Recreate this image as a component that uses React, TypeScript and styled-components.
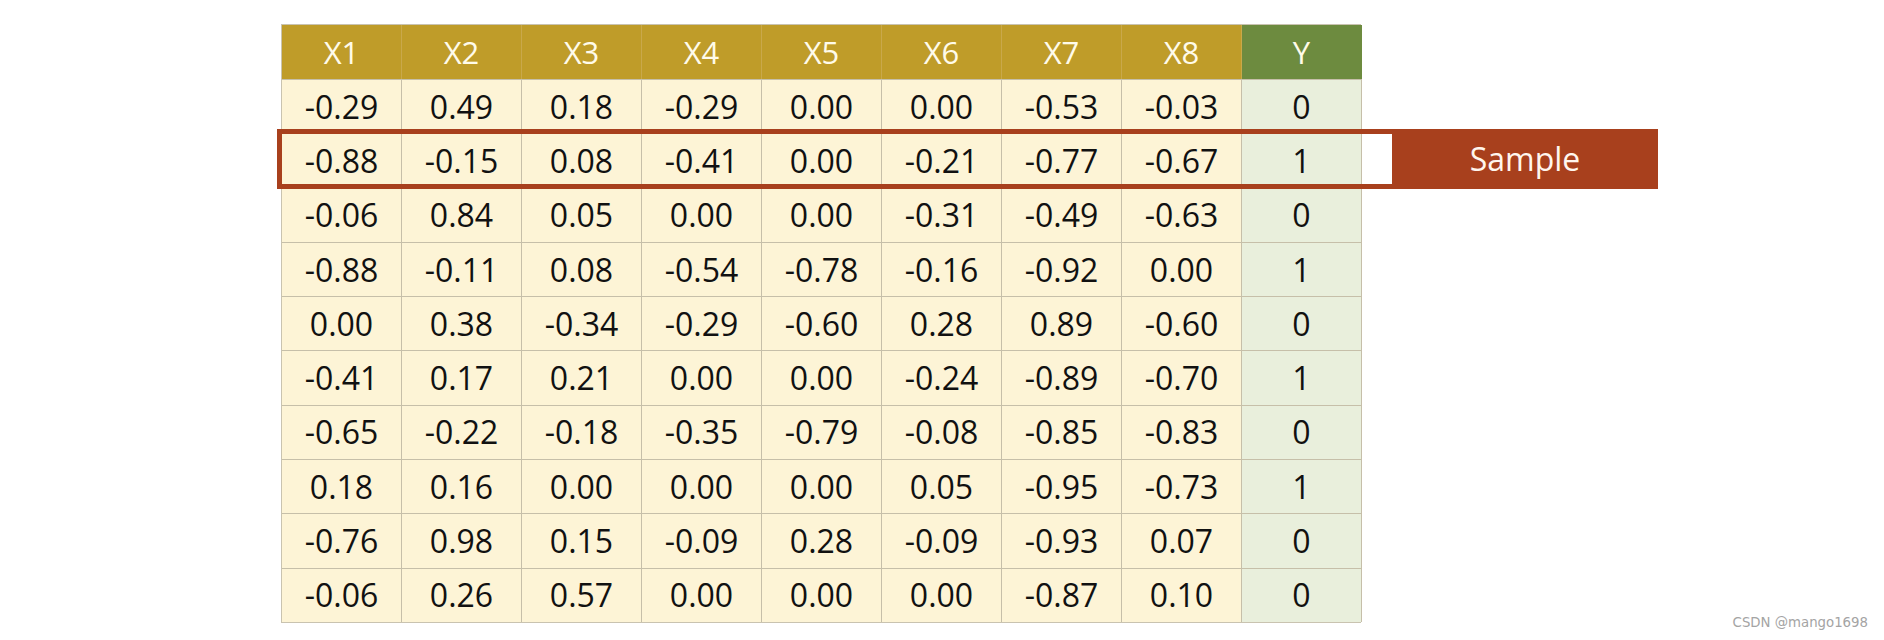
import React from "react";
import styled, { createGlobalStyle } from "styled-components";

const GlobalStyle = createGlobalStyle`
  html, body { margin: 0; padding: 0; background: #ffffff; }
  body { font-family: "Open Sans", "Noto Sans", sans-serif; }
`;

const Page = styled.div`
  position: relative;
  width: 1884px;
  height: 640px;
  box-sizing: border-box;
  padding: 24px 0 0 281px;
  overflow: hidden;
`;

const Grid = styled.div`
  display: grid;
  grid-template-columns: repeat(9, 120px);
  grid-template-rows: 54px repeat(10, 54.3px);
  width: 1080px;
  border: 1px solid #c9c3b0;
  box-sizing: border-box;
`;

const HeadCell = styled.div<{ $target?: boolean }>`
  display: flex;
  align-items: center;
  justify-content: center;
  background: ${(p) => (p.$target ? "#6d8b3f" : "#bf9c29")};
  color: #fffbea;
  font-size: 31px;
  line-height: 1;
  border-right: 1px solid ${(p) => (p.$target ? "#6d8b3f" : "#c9a84a")};
  box-sizing: border-box;
`;

const Cell = styled.div<{ $target?: boolean }>`
  display: flex;
  align-items: center;
  justify-content: center;
  background: ${(p) => (p.$target ? "#e9efdc" : "#fdf4d6")};
  color: #111;
  font-size: 32px;
  line-height: 1;
  border-right: 1px solid #c6bfa9;
  border-top: 1px solid #c6bfa9;
  box-sizing: border-box;
`;

const Highlight = styled.div`
  position: absolute;
  left: 277px;
  top: 129px;
  display: flex;
  height: 60px;
`;

const Frame = styled.div`
  width: 1115px;
  height: 60px;
  box-sizing: border-box;
  border: 5px solid #a8401d;
  border-right: none;
`;

const Label = styled.div`
  width: 266px;
  height: 60px;
  background: #a8401d;
  color: #fff6ee;
  display: flex;
  align-items: center;
  justify-content: center;
  font-size: 32px;
  line-height: 1;
`;

const Watermark = styled.div`
  position: absolute;
  right: 16px;
  bottom: 10px;
  font-family: "DejaVu Sans", Verdana, sans-serif;
  font-size: 13.3px;
  color: #a4a4a4;
`;

const headers = ["X1", "X2", "X3", "X4", "X5", "X6", "X7", "X8", "Y"];

const rows: string[][] = [
  ["-0.29", "0.49", "0.18", "-0.29", "0.00", "0.00", "-0.53", "-0.03", "0"],
  ["-0.88", "-0.15", "0.08", "-0.41", "0.00", "-0.21", "-0.77", "-0.67", "1"],
  ["-0.06", "0.84", "0.05", "0.00", "0.00", "-0.31", "-0.49", "-0.63", "0"],
  ["-0.88", "-0.11", "0.08", "-0.54", "-0.78", "-0.16", "-0.92", "0.00", "1"],
  ["0.00", "0.38", "-0.34", "-0.29", "-0.60", "0.28", "0.89", "-0.60", "0"],
  ["-0.41", "0.17", "0.21", "0.00", "0.00", "-0.24", "-0.89", "-0.70", "1"],
  ["-0.65", "-0.22", "-0.18", "-0.35", "-0.79", "-0.08", "-0.85", "-0.83", "0"],
  ["0.18", "0.16", "0.00", "0.00", "0.00", "0.05", "-0.95", "-0.73", "1"],
  ["-0.76", "0.98", "0.15", "-0.09", "0.28", "-0.09", "-0.93", "0.07", "0"],
  ["-0.06", "0.26", "0.57", "0.00", "0.00", "0.00", "-0.87", "0.10", "0"],
];

export default function App() {
  return (
    <>
      <GlobalStyle />
      <Page>
        <Grid>
          {headers.map((h, i) => (
            <HeadCell key={h} $target={i === 8}>
              {h}
            </HeadCell>
          ))}
          {rows.map((r, ri) =>
            r.map((v, ci) => (
              <Cell key={`${ri}-${ci}`} $target={ci === 8}>
                {v}
              </Cell>
            ))
          )}
        </Grid>
        <Highlight>
          <Frame />
          <Label>Sample</Label>
        </Highlight>
        <Watermark>CSDN @mango1698</Watermark>
      </Page>
    </>
  );
}
